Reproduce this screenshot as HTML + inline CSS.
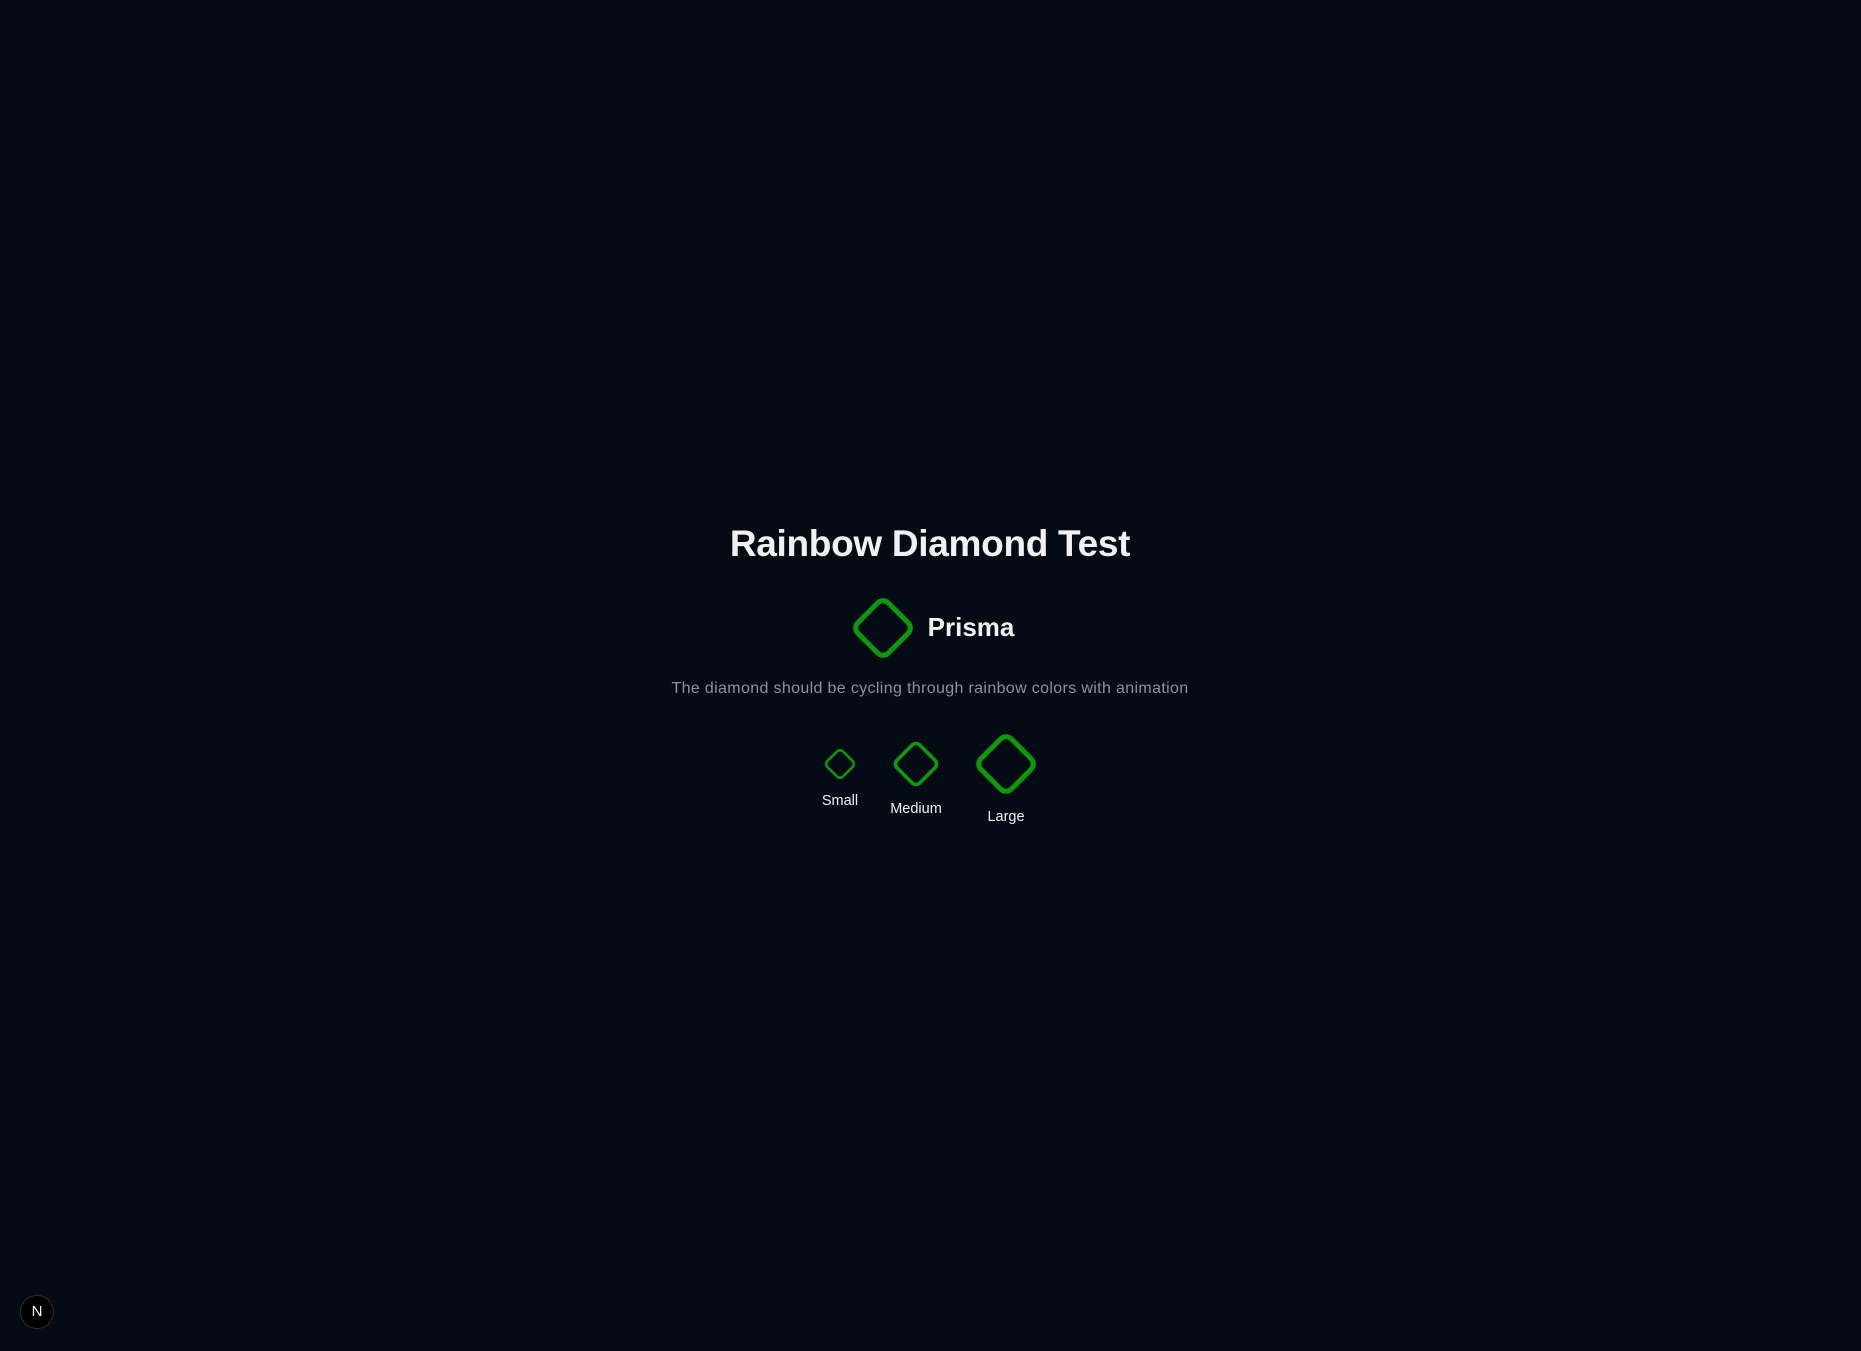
<!DOCTYPE html>
<html><head><meta charset="utf-8"><style>
html,body{margin:0;padding:0;width:1861px;height:1351px;background:#040b14;overflow:hidden;font-family:"Liberation Sans",sans-serif;}
.t{position:absolute;white-space:nowrap;transform:translateX(-50%);line-height:1;}
svg{position:absolute;overflow:visible}
</style></head><body>
<div class="t" style="left:930px;top:525px;font-size:37px;font-weight:bold;color:#f1f1f1;letter-spacing:-0.3px;">Rainbow Diamond Test</div>

<svg style="left:853px;top:598px" width="60" height="60" viewBox="0 0 60 60"><rect x="8.5" y="8.5" width="43" height="43" rx="7.5" transform="rotate(45 30 30)" fill="none" stroke="#0b9a0e" stroke-width="5"/></svg>
<div class="t" style="left:971px;top:614px;font-size:26px;font-weight:bold;color:#f1f1f1;">Prisma</div>

<div class="t" style="left:930px;top:681px;font-size:16px;letter-spacing:0.35px;color:#8e9399;">The diamond should be cycling through rainbow colors with animation</div>

<svg style="left:825px;top:749px" width="30" height="30" viewBox="0 0 30 30"><rect x="4" y="4" width="22" height="22" rx="4" transform="rotate(45 15 15)" fill="none" stroke="#0b9a0e" stroke-width="2.5"/></svg>
<svg style="left:894px;top:742px" width="44" height="44" viewBox="0 0 44 44"><rect x="5.9" y="5.9" width="32.2" height="32.2" rx="5.5" transform="rotate(45 22 22)" fill="none" stroke="#0b9a0e" stroke-width="3.6"/></svg>
<svg style="left:976px;top:734px" width="60" height="60" viewBox="0 0 60 60"><rect x="8.5" y="8.5" width="43" height="43" rx="7.5" transform="rotate(45 30 30)" fill="none" stroke="#0b9a0e" stroke-width="5"/></svg>

<div class="t" style="left:840px;top:794px;font-size:14.5px;color:#eef0f2;">Small</div>
<div class="t" style="left:916px;top:802px;font-size:14.5px;color:#eef0f2;">Medium</div>
<div class="t" style="left:1006px;top:810px;font-size:14.5px;color:#eef0f2;">Large</div>

<div style="position:absolute;left:20px;top:1295px;width:34px;height:34px;border-radius:50%;background:#000;border:1px solid #2a2f36;box-sizing:border-box;color:#fff;font-size:15px;text-align:center;line-height:32px;">N</div>
</body></html>
